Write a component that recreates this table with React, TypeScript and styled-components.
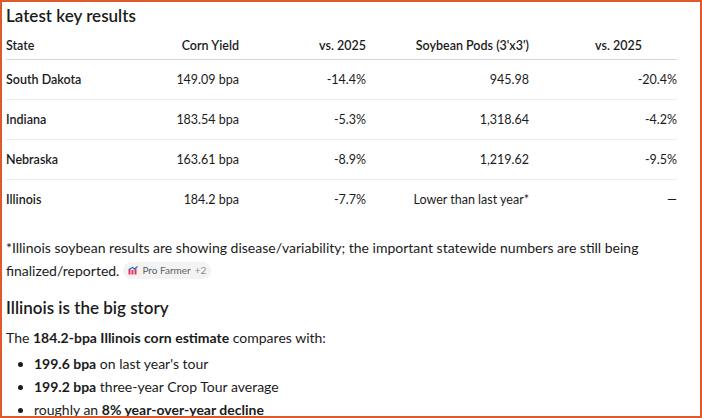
import styled, { createGlobalStyle } from "styled-components";

const GlobalStyle = createGlobalStyle`
  html, body {
    margin: 0;
    padding: 0;
    background: #ffffff;
  }
  body {
    font-family: "Segoe UI", Lato, "Liberation Sans", sans-serif;
    color: #1b1b1b;
  }
`;

const Frame = styled.div`
  box-sizing: border-box;
  width: 702px;
  height: 418px;
  border: 2px solid #e0592a;
  padding: 2px 4px 0 4px;
  overflow: hidden;
`;

const Title = styled.h2`
  margin: 0 0 1px;
  font-size: 17px;
  line-height: 24px;
  font-weight: 600;
`;

const Table = styled.table`
  width: 671px;
  border-collapse: collapse;
  table-layout: fixed;
  font-size: 12.5px;
`;

const Col = styled.col<{ $w: number }>`
  width: ${(p) => p.$w}px;
`;

const Th = styled.th<{ $align?: string; $pr?: number }>`
  height: 28px;
  padding: 2px ${(p) => p.$pr ?? 0}px 0 0;
  text-align: ${(p) => p.$align ?? "right"};
  font-weight: 600;
  border-bottom: 1px solid #d6d6d6;
`;

const Row = styled.tr<{ $last?: boolean }>`
  border-bottom: ${(p) => (p.$last ? "none" : "1px solid #ececec")};
`;

const Td = styled.td<{ $align?: string; $bold?: boolean }>`
  height: 39px;
  padding: 0;
  text-align: ${(p) => p.$align ?? "right"};
  font-weight: ${(p) => (p.$bold ? 600 : 400)};
`;

const Note = styled.p`
  margin: 17px 0 0;
  font-size: 14px;
  line-height: 23px;
`;

const Chip = styled.span`
  display: inline-flex;
  align-items: center;
  gap: 4px;
  height: 17px;
  padding: 0 5px;
  margin-left: 4px;
  border-radius: 9px;
  background: #f3f3f3;
  font-size: 10px;
  line-height: 17px;
  color: #5f5f5f;
  vertical-align: 1px;
`;

const ChipMore = styled.span`
  color: #8a8a8a;
`;

const Heading = styled.h3`
  margin: 14px 0 0;
  font-size: 17px;
  line-height: 24px;
  font-weight: 600;
`;

const Para = styled.p`
  margin: 6px 0 0;
  font-size: 14px;
  line-height: 23px;
`;

const List = styled.ul`
  margin: 3px 0 0;
  padding: 0 0 0 28px;
  font-size: 14px;
  line-height: 23px;
`;

const Item = styled.li`
  padding-left: 0;
`;

const rows = [
  ["South Dakota", "149.09 bpa", "-14.4%", "945.98", "-20.4%"],
  ["Indiana", "183.54 bpa", "-5.3%", "1,318.64", "-4.2%"],
  ["Nebraska", "163.61 bpa", "-8.9%", "1,219.62", "-9.5%"],
  ["Illinois", "184.2 bpa", "-7.7%", "Lower than last year*", "—"],
];

function ProFarmerLogo() {
  return (
    <svg width="10" height="9" viewBox="0 0 10 9">
      <rect x="0.5" y="3" width="2" height="5.5" fill="#e2345a" />
      <rect x="3.5" y="4" width="2" height="4.5" fill="#e2345a" />
      <rect x="6.5" y="2.5" width="2" height="6" fill="#e2345a" />
      <path d="M1 3.5 L4.5 1.5 L6.5 3 L9.5 0.5" stroke="#2f5fd0" strokeWidth="1.2" fill="none" />
    </svg>
  );
}

export default function App() {
  return (
    <>
      <GlobalStyle />
      <Frame>
        <Title>Latest key results</Title>
        <Table>
          <colgroup>
            <Col $w={140} />
            <Col $w={93} />
            <Col $w={127} />
            <Col $w={163} />
            <Col $w={148} />
          </colgroup>
          <thead>
            <tr>
              <Th $align="left">State</Th>
              <Th>Corn Yield</Th>
              <Th>vs. 2025</Th>
              <Th>Soybean Pods (3'x3')</Th>
              <Th $pr={35}>vs. 2025</Th>
            </tr>
          </thead>
          <tbody>
            {rows.map((r, i) => (
              <Row key={r[0]} $last={i === rows.length - 1}>
                <Td $align="left" $bold>{r[0]}</Td>
                <Td>{r[1]}</Td>
                <Td>{r[2]}</Td>
                <Td>{r[3]}</Td>
                <Td>{r[4]}</Td>
              </Row>
            ))}
          </tbody>
        </Table>
        <Note>
          *Illinois soybean results are showing disease/variability; the important statewide numbers are still being
          finalized/reported.
          <Chip>
            <ProFarmerLogo />
            <span>Pro Farmer</span>
            <ChipMore>+2</ChipMore>
          </Chip>
        </Note>
        <Heading>Illinois is the big story</Heading>
        <Para>
          The <b>184.2-bpa Illinois corn estimate</b> compares with:
        </Para>
        <List>
          <Item><b>199.6 bpa</b> on last year's tour</Item>
          <Item><b>199.2 bpa</b> three-year Crop Tour average</Item>
          <Item>roughly an <b>8% year-over-year decline</b></Item>
        </List>
      </Frame>
    </>
  );
}
